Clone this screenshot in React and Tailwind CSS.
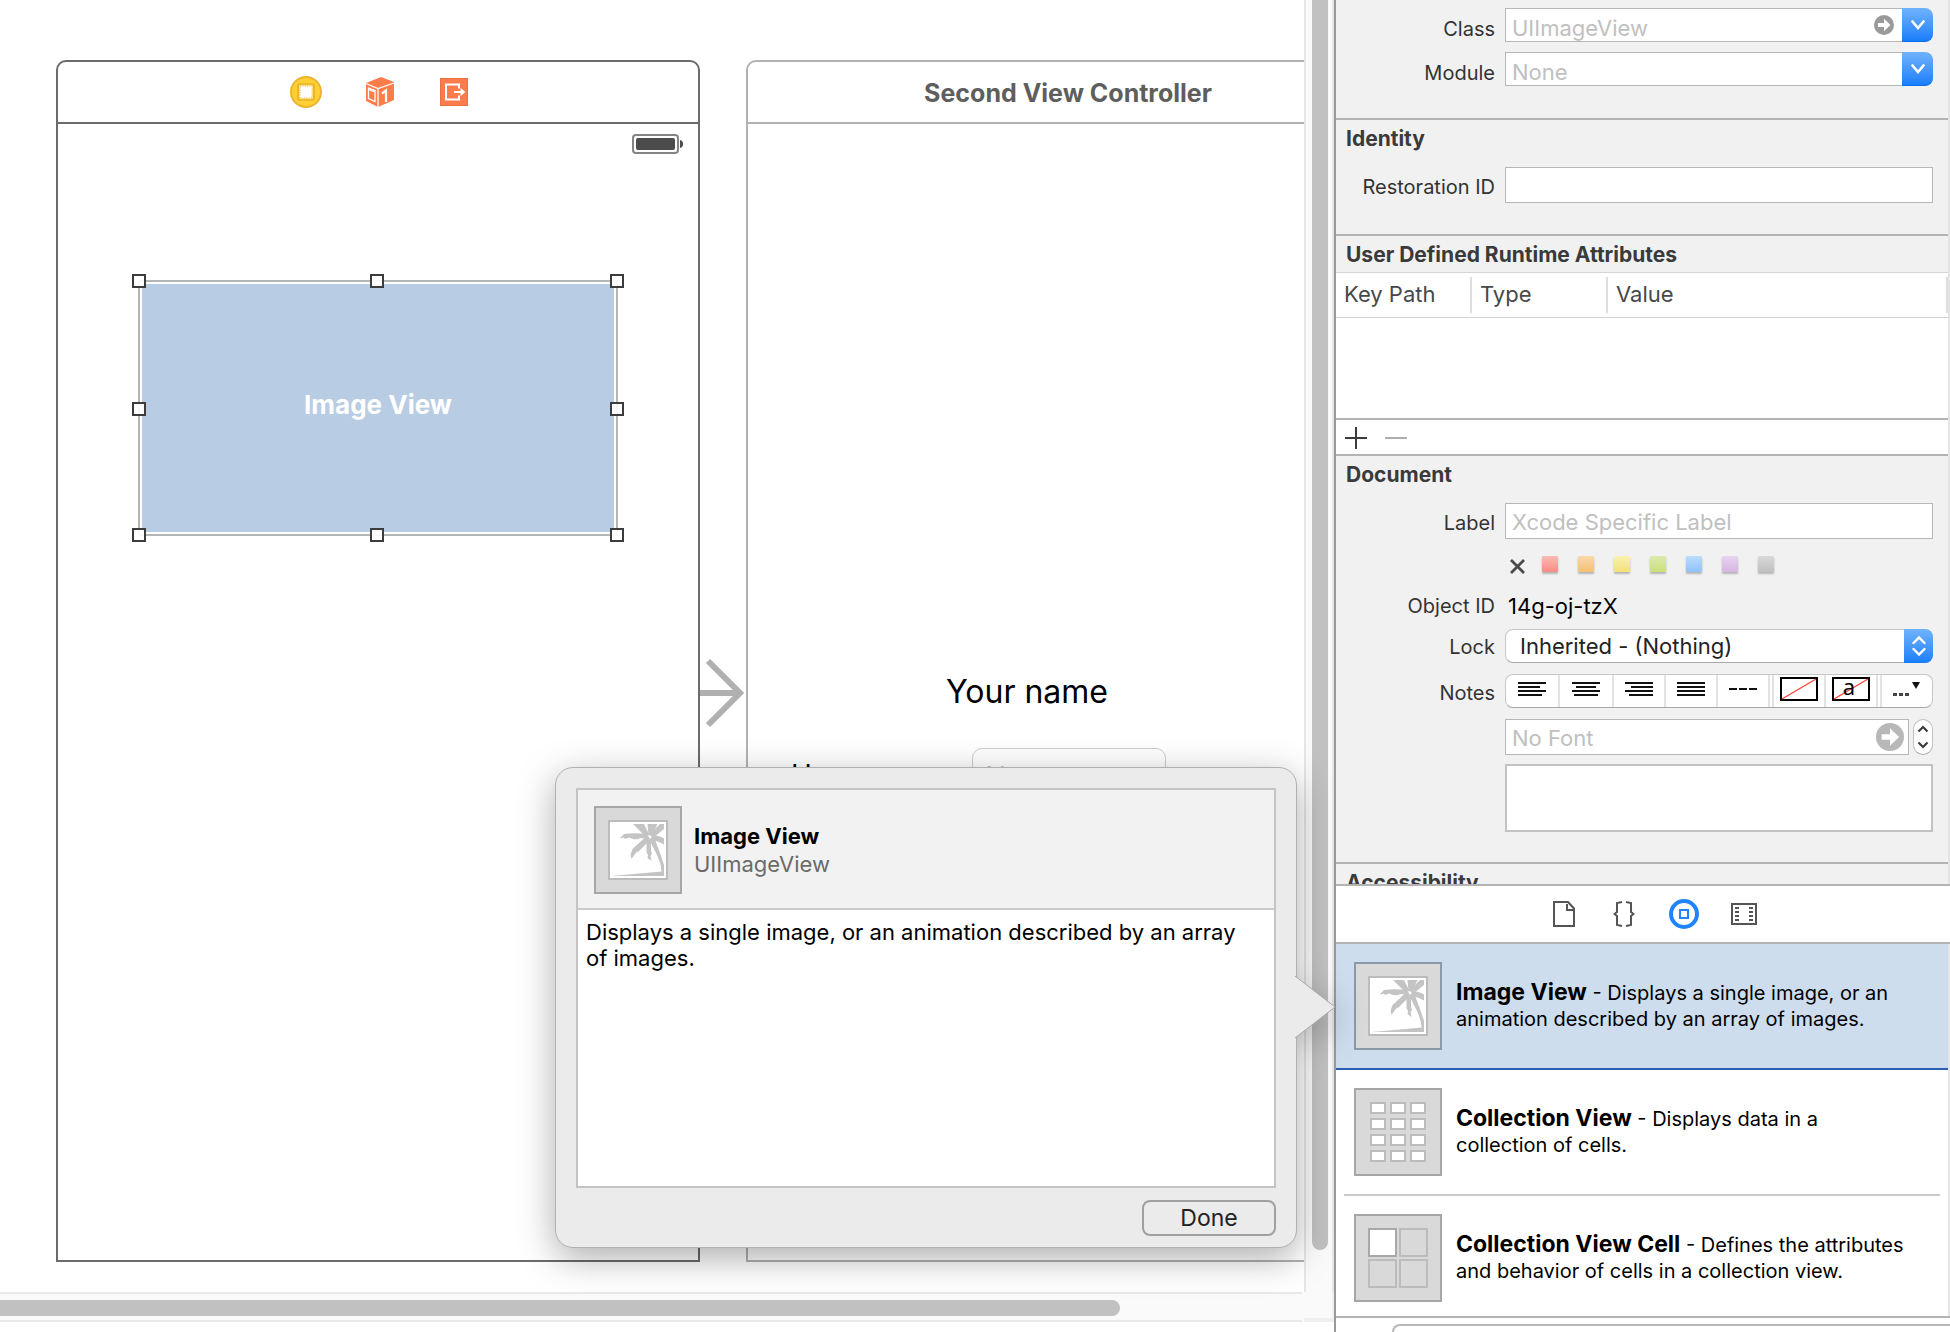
import React from "react";

const ORANGE = "#fc7c4c";

function SceneDockIcons() {
  return (
    <div className="flex h-full items-center justify-center gap-[42px] pl-1">
      <svg width="32" height="32" viewBox="0 0 32 32">
        <circle cx="16" cy="16" r="15" fill="#ffd034" stroke="#eeb32c" strokeWidth="2" />
        <rect x="8" y="8" width="16" height="16" rx="1" fill="#ffd034" stroke="#dfa32a" strokeWidth="1.2" />
        <rect x="9.500" y="9.500" width="13" height="13" fill="#fff" />
        <rect x="10" y="10" width="12" height="12" fill="none" stroke="#e8ae2c" strokeWidth="1" strokeDasharray="1 1.400" />
      </svg>
      <svg width="32" height="32" viewBox="-2 0 32 32">
        <path d="M15 1 L28 6 V24 L12 31 L0 25 V7 Z" fill={ORANGE} />
        <path d="M0 7.5 L12 12.5 L28 7 M12 12.5 V31" fill="none" stroke="#fff" strokeWidth="1.3" />
        <path d="M2.5 12 L9 14.5 V25.500 L2.5 22.500 Z M4 12.500 V14 L7.500 15.500 V14" fill="none" stroke="#fff" strokeWidth="1.3" />
        <path d="M16 17.500 L20 14.500 V26" fill="none" stroke="#fff" strokeWidth="2.2" />
      </svg>
      <svg width="32" height="32" viewBox="-2 -2 32 32">
        <rect x="0.5" y="0.5" width="27" height="27" fill={ORANGE} stroke="#ec6f42" />
        <path d="M19 10.500 V6.500 H6 V21.500 H19 V17.500" fill="none" stroke="#fff" strokeWidth="2" />
        <path d="M14 14 H22" stroke="#fff" strokeWidth="2" />
        <path d="M20.500 10 L25.500 14 L20.500 18 Z" fill="#fff" />
      </svg>
    </div>
  );
}

const PalmThumb = ({ selected }) => (
  <svg className="shrink-0" width="88" height="88" viewBox="0 0 88 88">
    <rect x="1" y="1" width="86" height="86" fill="#d9d9d9" stroke={selected ? "#8c99a6" : "#a6a6a6"} strokeWidth="2" />
    <rect x="15" y="15" width="58" height="58" fill="#fff" stroke="#bcbcbc" strokeWidth="2" />
    <g fill="#c4c4c4">
      <path d="M39 18 H50 L55.500 29 L51 30 Q46 25 39 18Z" />
      <path d="M53.500 18 H63.500 L57.600 30 L54.500 29Z" />
      <path d="M66 18 H70 V23 L59 32 L56 28Z" />
      <path d="M57 29 Q65 29 70 32.500 V38.500 Q65 35 58 34Z" />
      <path d="M25.500 32.500 L30 28 Q40 26.500 53 28 L56 33 L46 32 Q44 34 39 33 L35 31.500 L31 33 L30 31.500Z" />
      <path d="M52.500 30 L56 34 L47 43 L44 46 L43 45.500 L39.500 50 L37.500 53 L36.500 49 L38.500 43 Q44 38 52.500 30Z" />
      <path d="M52.500 34 H57 L57 45 L58 48 L56.500 50 L57.500 55 L53.500 52 L54 49 L52.500 46Z" />
      <path d="M55 33 L60 31 L66 47 L70 59 V70 H17.600 L67.600 65.500 Q67 57 62.500 48 Q59 41 55 33Z" />
    </g>
  </svg>
);

const GridThumb = () => (
  <div className="grid size-[88px] shrink-0 grid-cols-[16px_16px_16px] grid-rows-[12px_12px_12px_12px] content-center justify-center gap-1 border-2 border-[#a6a6a6] bg-[#d9d9d9]">
    {Array.from({ length: 12 }, (_, i) => (
      <span key={i} className="border-2 border-[#bcbcbc] bg-white" />
    ))}
  </div>
);

const CellThumb = () => (
  <div className="grid size-[88px] shrink-0 grid-cols-[29px_29px] grid-rows-[29px_29px] content-center justify-center gap-0.5 border-2 border-[#a6a6a6] bg-[#d9d9d9]">
    <span className="border-2 border-[#a8a8a8] bg-white" />
    <span className="border-2 border-[#bcbcbc]" />
    <span className="border-2 border-[#bcbcbc]" />
    <span className="border-2 border-[#bcbcbc]" />
  </div>
);

const GoArrow = ({ size, color }) => (
  <svg width={size} height={size} viewBox="0 0 20 20">
    <circle cx="10" cy="10" r="10" fill={color} />
    <path d="M4 8 H10 V3.800 L16.500 10 L10 16.200 V12 H4 Z" fill="#fff" />
  </svg>
);

const Handle = ({ place }) => (
  <span className={"absolute size-[14px] border-2 border-[#3c3c3c] bg-white/90 " + place} />
);

function Canvas() {
  return (
    <div className="relative min-w-0 flex-1 overflow-hidden bg-white">
      {/* first scene */}
      <section className="absolute left-[56px] top-[60px] flex h-[1202px] w-[644px] flex-col rounded-t-[10px] border-2 border-[#6b6b6b] bg-white">
        <div className="h-[62px] shrink-0 border-b-2 border-[#6b6b6b]">
          <SceneDockIcons />
        </div>
        <div className="flex justify-end pr-[15px] pt-[10px]">
          <svg width="51" height="20" viewBox="0 0 51 20">
            <rect x="1" y="1" width="45" height="18" rx="3" fill="#fff" stroke="#858585" strokeWidth="2" />
            <rect x="4" y="4" width="39" height="12" rx="2" fill="#4b4b4b" />
            <path d="M48 6 Q51 6.500 51 10 Q51 13.500 48 14Z" fill="#4b4b4b" />
          </svg>
        </div>
        <div className="relative ml-20 mt-[126px] flex h-[256px] w-[480px] border-2 border-[#b5b5b5] p-0.5">
          <div className="flex flex-1 items-center justify-center bg-[#b8cce4] pb-1.5 text-[26px] font-bold leading-8 text-white">
            Image View
          </div>
          <Handle place="-left-2 -top-2" />
          <Handle place="left-[230px] -top-2" />
          <Handle place="-right-2 -top-2" />
          <Handle place="-left-2 top-[120px]" />
          <Handle place="-right-2 top-[120px]" />
          <Handle place="-left-2 -bottom-2" />
          <Handle place="left-[230px] -bottom-2" />
          <Handle place="-right-2 -bottom-2" />
        </div>
      </section>

      {/* segue arrow */}
      <svg className="absolute left-[700px] top-[656px]" width="46" height="74" viewBox="0 0 46 74">
        <path d="M0 37 H40 M8 5 L40 37 L8 69" fill="none" stroke="#b0b0b0" strokeWidth="6" />
      </svg>

      {/* second scene */}
      <section className="absolute left-[746px] top-[60px] h-[1202px] w-[644px] rounded-t-[10px] border-2 border-[#b2b2b2] bg-white">
        <h2 className="flex h-[62px] items-center justify-center border-b-2 border-[#b2b2b2] pt-1 text-[25px] font-bold text-[#5e5e5e]">
          Second View Controller
        </h2>
        <p className="absolute left-[198px] top-[610px] text-[32px] leading-10 text-black">Your name</p>
        <label htmlFor="scene-name" className="absolute left-[43px] top-[693px] text-[28px] leading-10 text-black">
          Username
        </label>
        <input
          id="scene-name"
          placeholder="Name"
          className="absolute left-[224px] top-[686px] h-[58px] w-[194px] rounded-[10px] border border-[#cccccc] px-3 text-[28px] placeholder:text-[#c4c4c4]"
        />
      </section>
    </div>
  );
}

function Popover() {
  return (
    <div
      role="dialog"
      aria-label="Image View"
      className="absolute right-[653px] top-[767px] w-[742px] rounded-[18px] border border-[#b0b0b0] bg-[#ebebeb] px-5 pb-[11px] pt-5 drop-shadow-[0_10px_18px_rgba(0,0,0,0.32)]"
    >
      <div className="flex h-[400px] flex-col border-2 border-[#c4c4c4] bg-white">
        <div className="flex items-center gap-3 border-b-2 border-[#cacaca] bg-[#f2f2f2] px-4 pb-[14px] pt-4">
          <PalmThumb />
          <div className="text-[22px] leading-7">
            <h3 className="font-bold text-black">Image View</h3>
            <p className="text-[#6a6a6a]">UIImageView</p>
          </div>
        </div>
        <p className="pl-2 pr-6 pt-[9px] text-[22px] leading-[26px] text-black">
          Displays a single image, or an animation described by an array of images.
        </p>
      </div>
      <div className="flex justify-end pt-3">
        <button className="h-9 w-[134px] rounded-lg border-2 border-[#a0a0a0] text-[23px] leading-7 text-[#222]">Done</button>
      </div>
      <svg className="absolute -right-[40px] top-[207px]" width="41" height="64" viewBox="0 0 41 64">
        <path d="M0 1 L40 32 L0 63 Z" fill="#ebebeb" />
        <path d="M0 1 L40 32 L0 63" fill="none" stroke="#a8a8a8" />
      </svg>
    </div>
  );
}

const rowGrid = "grid grid-cols-[159px_1fr] gap-x-[10px] pr-[15px]";
const fieldBox =
  "w-full min-w-0 border border-[#b6b6b6] bg-white px-1.5 pt-0.5 text-[22px] text-[#222] placeholder:text-[#c0c0c0]";
const labelText = "text-right text-[20px] leading-6 text-[#333]";

const Heading = ({ children }) => (
  <h2 className="flex h-[38px] items-center pl-[10px] text-[21px] font-bold leading-6 text-[#3a3a3a]">{children}</h2>
);

function ComboRow({ id, label, placeholder, go }) {
  return (
    <div className={rowGrid}>
      <label htmlFor={id} className={labelText + " pt-[9px]"}>
        {label}
      </label>
      <div className="relative flex h-[34px]">
        <input
          id={id}
          placeholder={placeholder}
          className="w-full min-w-0 border border-r-0 border-[#b6b6b6] bg-white px-1.5 pt-1.5 text-[22px] text-[#222] placeholder:text-[#c0c0c0]"
        />
        {go && (
          <button aria-label="Jump to definition" className="absolute right-[39px] top-[7px]">
            <GoArrow size={20} color="#9a9a9a" />
          </button>
        )}
        <button
          aria-label={label + " choices"}
          className="flex w-[31px] shrink-0 items-center justify-center rounded-r-lg border-b border-[#0a6cf0] bg-linear-to-b from-[#6fb2fb] to-[#157efb]"
        >
          <svg width="14" height="10" viewBox="0 0 14 10">
            <path d="M1.500 1.500 L7 8 L12.500 1.500" fill="none" stroke="#fff" strokeWidth="2.6" strokeLinecap="round" />
          </svg>
        </button>
      </div>
    </div>
  );
}

const Lines = ({ rows }) => (
  <svg width="28" height="14" viewBox="0 0 28 14" className="mb-1">
    {rows.map(([x, w], i) => (
      <rect key={i} x={x} y={i * 4} width={w} height="2" fill="#111" />
    ))}
  </svg>
);

const swatches = [
  ["Red", "bg-linear-to-b from-[#fbb9b5] to-[#f98a84]"],
  ["Orange", "bg-linear-to-b from-[#f9d9a9] to-[#f5c073]"],
  ["Yellow", "bg-linear-to-b from-[#faf1b0] to-[#f2e176]"],
  ["Green", "bg-linear-to-b from-[#dcebab] to-[#cbdf76]"],
  ["Blue", "bg-linear-to-b from-[#bcdcfd] to-[#8fc3fa]"],
  ["Purple", "bg-linear-to-b from-[#e8d4ee] to-[#d6b5e3]"],
  ["Gray", "bg-linear-to-b from-[#d9d9d9] to-[#c0c0c0]"],
];

const seg = "flex items-center justify-center border-[#e2e2e2]";

function NotesBar() {
  return (
    <div className="flex h-[34px] overflow-hidden rounded-lg border border-[#c6c6c6] border-b-[#a8a8a8] bg-white">
      <button aria-label="Align left" className={seg + " w-[54px] border-r-2"}>
        <Lines rows={[[0, 28], [0, 22], [0, 28], [0, 24]]} />
      </button>
      <button aria-label="Align center" className={seg + " w-[54px] border-r-2"}>
        <Lines rows={[[0, 28], [4, 20], [0, 28], [2, 24]]} />
      </button>
      <button aria-label="Align right" className={seg + " w-[52px] border-r-2"}>
        <Lines rows={[[0, 28], [6, 22], [0, 28], [4, 24]]} />
      </button>
      <button aria-label="Justify" className={seg + " w-[52px] border-r-2"}>
        <Lines rows={[[0, 28], [0, 28], [0, 28], [0, 28]]} />
      </button>
      <button aria-label="Natural alignment" className={seg + " w-[52px] border-r-2"}>
        <svg width="28" height="2" viewBox="0 0 28 2" className="mb-1">
          <path d="M0 1 H8 M10 1 H18 M20 1 H28" stroke="#111" strokeWidth="2" />
        </svg>
      </button>
      <button aria-label="Background color" className={seg + " ml-0.5 w-[54px] border-x-2"}>
        <svg width="38" height="24" viewBox="0 0 38 24" className="mb-1">
          <rect x="1" y="1" width="36" height="22" fill="#fff" stroke="#000" strokeWidth="2" />
          <path d="M2 22 L36 2" stroke="#ff4136" strokeWidth="1.3" />
        </svg>
      </button>
      <button aria-label="Text color" className={seg + " w-[52px] border-r-2"}>
        <svg width="38" height="24" viewBox="0 0 38 24" className="mb-1 overflow-visible">
          <rect x="1" y="1" width="36" height="22" fill="#fff" stroke="#000" strokeWidth="2" />
          <path d="M2 22 L36 2" stroke="#ff4136" strokeWidth="1.3" />
          <text x="17" y="18" textAnchor="middle" fontFamily="Noto Sans" fontSize="22" fill="#000">
            a
          </text>
        </svg>
      </button>
      <button aria-label="More" className={seg + " ml-0.5 flex-1 border-l-2"}>
        <svg width="28" height="16" viewBox="0 0 28 16" className="mb-1">
          <path d="M0 12 H4 V15 H0Z M6 12 H10 V15 H6Z M12 12 H16 V15 H12Z" fill="#444" />
          <path d="M19 1 H27 L23 8Z" fill="#111" />
        </svg>
      </button>
    </div>
  );
}

function Inspector() {
  return (
    <div className="min-h-0 flex-1 overflow-hidden border-r-2 border-[#e4e4e4] bg-[#f1f1f1]">
      <section className="flex flex-col gap-[10px] border-b-2 border-[#b3b3b3] pb-8 pt-2">
        <ComboRow id="class" label="Class" placeholder="UIImageView" go />
        <ComboRow id="module" label="Module" placeholder="None" />
      </section>

      <section className="border-b-2 border-[#b3b3b3] pb-[31px]">
        <Heading>Identity</Heading>
        <div className={rowGrid + " pt-[9px]"}>
          <label htmlFor="restoration" className={labelText + " pt-2"}>
            Restoration ID
          </label>
          <input id="restoration" className={fieldBox + " h-9"} />
        </div>
      </section>

      <section>
        <div className="-mb-0.5">
          <Heading>User Defined Runtime Attributes</Heading>
        </div>
        <div className="h-[148px] border-b-2 border-t border-b-[#b3b3b3] border-t-[#d4d4d4] bg-white">
          <table className="w-full table-fixed border-collapse text-left text-[22px] leading-7 text-[#484848]">
            <thead>
              <tr className="h-11 border-b border-[#d4d4d4]">
                <th className="w-[136px] p-0 font-normal">
                  <div className="border-r-2 border-[#dedede] pb-[5px] pl-2 pt-[3px]">Key Path</div>
                </th>
                <th className="w-[136px] p-0 font-normal">
                  <div className="border-r-2 border-[#dedede] pb-[5px] pl-2 pt-[3px]">Type</div>
                </th>
                <th className="p-0 font-normal">
                  <div className="border-r-2 border-[#dedede] pb-[5px] pl-2 pt-[3px]">Value</div>
                </th>
              </tr>
            </thead>
          </table>
        </div>
        <div className="flex h-9 items-center gap-[18px] border-b-2 border-[#b3b3b3] bg-white pl-[9px] pt-0.5">
          <button aria-label="Add attribute">
            <svg width="22" height="22" viewBox="0 0 22 22">
              <path d="M0 11 H22 M11 0 V22" stroke="#3c3c3c" strokeWidth="2" />
            </svg>
          </button>
          <button aria-label="Remove attribute">
            <svg width="22" height="22" viewBox="0 0 22 22">
              <path d="M0 11 H22" stroke="#adadad" strokeWidth="2" />
            </svg>
          </button>
        </div>
      </section>

      <section className="border-b-2 border-[#b3b3b3] pb-[30px]">
        <Heading>Document</Heading>
        <div className={rowGrid + " pt-[9px]"}>
          <label htmlFor="label" className={labelText + " pt-2"}>
            Label
          </label>
          <input id="label" placeholder="Xcode Specific Label" className={fieldBox + " h-9"} />
        </div>
        <div className={rowGrid + " pt-[17px]"}>
          <div className="col-start-2 flex h-4 items-center gap-5 pl-[5px]">
            <button aria-label="No color" className="-mr-[3px] mt-1">
              <svg width="15" height="15" viewBox="0 0 15 15">
                <path d="M1 1 L14 14 M14 1 L1 14" stroke="#4a4a4a" strokeWidth="2.800" />
              </svg>
            </button>
            {swatches.map(([name, cls]) => (
              <button
                key={name}
                aria-label={name}
                className={"size-4 rounded-[1px] shadow-[0_2px_2px_rgba(0,0,0,0.25)] " + cls}
              />
            ))}
          </div>
        </div>
        <div className={rowGrid + " pt-[22px]"}>
          <span className={labelText}>Object ID</span>
          <span className="pl-[3px] text-[22px] leading-6 text-black">14g-oj-tzX</span>
        </div>
        <div className={rowGrid + " pt-[11px]"}>
          <label htmlFor="lock" className={labelText + " pt-1.5"}>
            Lock
          </label>
          <div className="relative flex h-[34px]">
            <select
              id="lock"
              className="w-full appearance-none rounded-lg border border-[#c6c6c6] border-b-[#a8a8a8] bg-white pl-[14px] text-[22px] leading-7 text-[#222]"
            >
              <option>Inherited - (Nothing)</option>
            </select>
            <span className="pointer-events-none absolute inset-y-0 right-0 flex w-[29px] items-center justify-center rounded-r-lg bg-linear-to-b from-[#6fb2fb] to-[#157efb]">
              <svg width="14" height="20" viewBox="0 0 14 20">
                <path
                  d="M1.500 7 L7 1.500 L12.500 7 M1.500 13 L7 18.500 L12.500 13"
                  fill="none"
                  stroke="#fff"
                  strokeWidth="2.4"
                  strokeLinecap="round"
                />
              </svg>
            </span>
          </div>
        </div>
        <div className={rowGrid + " pt-[11px]"}>
          <label htmlFor="notes" className={labelText + " pt-[7px]"}>
            Notes
          </label>
          <NotesBar />
        </div>
        <div className={rowGrid + " pt-[11px]"}>
          <div className="col-start-2 flex gap-1">
            <div className="relative flex h-9 flex-1">
              <input aria-label="Font" placeholder="No Font" className={fieldBox} />
              <button aria-label="Show font" className="absolute right-[5px] top-1">
                <GoArrow size={28} color="#b8b8b8" />
              </button>
            </div>
            <button
              aria-label="Font size"
              className="flex w-5 items-center justify-center rounded-full border border-[#c0c0c0] border-b-[#a8a8a8] bg-white"
            >
              <svg width="12" height="24" viewBox="0 0 12 24">
                <path
                  d="M1.500 6.500 L6 2 L10.500 6.500 M1.500 17.500 L6 22 L10.500 17.500"
                  fill="none"
                  stroke="#3c3c3c"
                  strokeWidth="2.2"
                />
              </svg>
            </button>
          </div>
        </div>
        <div className={rowGrid + " pt-[9px]"}>
          <textarea id="notes" className="col-start-2 block h-[68px] resize-none border-2 border-[#c2c2c2] bg-white" />
        </div>
      </section>
      <Heading>Accessibility</Heading>
    </div>
  );
}

const items = [
  { name: "Image View", text: "Displays a single image, or an animation described by an array of images." },
  { name: "Collection View", text: "Displays data in a collection of cells." },
  { name: "Collection View Cell", text: "Defines the attributes and behavior of cells in a collection view." },
];

function ItemBody({ item, children }) {
  return (
    <button className="flex w-full items-center gap-[14px] text-left">
      {children}
      <span className="block pb-0.5 text-[20px] leading-[26px] text-black">
        <strong className="text-[23px] font-bold">{item.name}</strong> - {item.text}
      </span>
    </button>
  );
}

const tab = "flex h-full w-15 items-center justify-center";

function Library() {
  return (
    <div className="shrink-0 border-t-2 border-[#b3b3b3] bg-white">
      <nav className="flex h-[58px] justify-center border-b-2 border-[#b3b3b3] pl-[22px]">
        <button aria-label="File templates" className={tab}>
          <svg width="22" height="26" viewBox="0 0 22 26" fill="none" stroke="#555" strokeWidth="2">
            <path d="M1 1 H15 L21 7.500 V25 H1 Z M14 3 V9 H20" />
          </svg>
        </button>
        <button aria-label="Code snippets" className={tab}>
          <svg width="22" height="26" viewBox="0 0 22 26" fill="none" stroke="#555" strokeWidth="2">
            <path d="M9 1 L4 2 V11 L1.500 13 L4 15 V24 L9 25 M13 1 L18 2 V11 L20.500 13 L18 15 V24 L13 25" />
          </svg>
        </button>
        <button aria-label="Objects" className={tab}>
          <svg width="30" height="30" viewBox="0 0 30 30" fill="none" stroke="#2085fc">
            <circle cx="15" cy="15" r="13" strokeWidth="4" />
            <rect x="11" y="11" width="8" height="8" strokeWidth="2" />
          </svg>
        </button>
        <button aria-label="Media" className={tab}>
          <svg width="26" height="22" viewBox="0 0 26 22" fill="none" stroke="#555" strokeWidth="2">
            <rect x="1" y="1" width="24" height="20" />
            <path d="M4 5 H8 M4 9 H8 M4 13 H8 M4 17 H8 M18 5 H22 M18 9 H22 M18 13 H22 M18 17 H22" />
          </svg>
        </button>
      </nav>
      <ul className="border-r-2 border-[#e4e4e4]">
        <li className="border-b-2 border-[#2c5fb3] bg-[#cdddee] py-[18px] pl-[18px] pr-[38px]">
          <ItemBody item={items[0]}>
            <PalmThumb selected />
          </ItemBody>
        </li>
        <li className="mx-2 border-b-2 border-[#cacaca] py-[18px] pl-[10px] pr-[30px]">
          <ItemBody item={items[1]}>
            <GridThumb />
          </ItemBody>
        </li>
        <li className="pb-[14px] pl-[18px] pr-[38px] pt-[18px]">
          <ItemBody item={items[2]}>
            <CellThumb />
          </ItemBody>
        </li>
      </ul>
      <div className="h-4 overflow-hidden border-t-2 border-[#b3b3b3] pl-14 pt-1.5">
        <input aria-label="Filter" className="h-8 w-full rounded-l-lg border-2 border-r-0 border-[#b8b8b8] bg-white" />
      </div>
    </div>
  );
}

export default function App() {
  return (
    <div className="relative flex h-screen overflow-hidden bg-white font-['Inter','Liberation_Sans',sans-serif]">
      <main className="flex min-w-0 flex-1 flex-col">
        <div className="flex min-h-0 flex-1">
          <Canvas />
          <div className="w-[30px] shrink-0 border-l-2 border-r-2 border-[#e6e6e6] bg-[#fafafa] pb-[42px] pl-1.5">
            <div className="h-full w-4 rounded-b-full bg-[#c1c1c1]" />
          </div>
        </div>
        <div className="flex h-[30px] shrink-0 bg-[#fafafa]">
          <div className="flex-1 border-b-2 border-t-2 border-[#e9e9e9] pt-1.5">
            <div className="h-4 w-[86%] rounded-r-full bg-[#c1c1c1]" />
          </div>
          <div className="ml-0.5 w-[30px] border-b-4 border-r-2 border-[#efefef]" />
        </div>
        <div className="h-[10px] shrink-0 bg-white" />
      </main>
      <aside className="flex w-[616px] shrink-0 flex-col border-l-2 border-[#999999]">
        <Inspector />
        <Library />
      </aside>
      <Popover />
    </div>
  );
}
